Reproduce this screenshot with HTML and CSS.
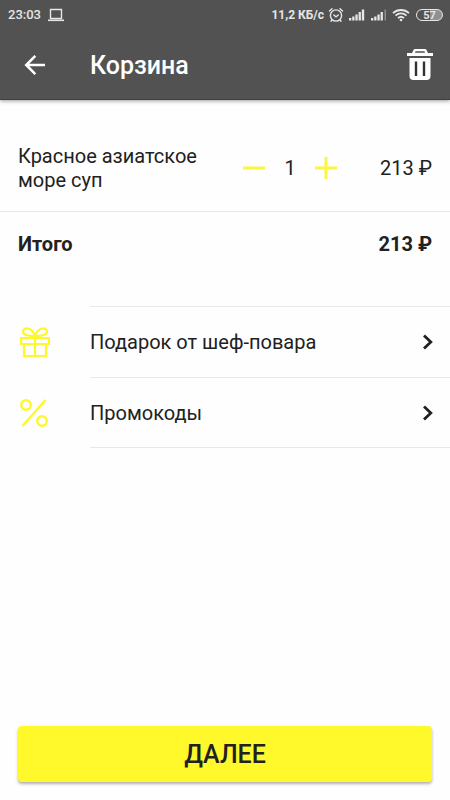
FILE: index.html
```html
<!DOCTYPE html>
<html lang="ru">
<head>
<meta charset="utf-8">
<meta name="viewport" content="width=device-width, initial-scale=1">
<title>Корзина</title>
<link rel="stylesheet" href="styles.css">
</head>
<body>
<div class="screen">
  <header class="top">
    <div class="status">
      <span class="status-time">23:03</span>
      <svg class="laptop" width="18" height="14" viewBox="0 0 18 14" fill="none" stroke="currentColor"><path d="M3.5 1.5h11v9h-11z" stroke-width="1.4"/><path d="M1 12.3h16" stroke-width="1.6"/></svg>
      <span class="status-speed">11,2 КБ/с</span>
      <svg class="alarm" width="16" height="16" viewBox="0 0 16 16" fill="none" stroke="currentColor" stroke-width="1.4" stroke-linecap="round"><circle cx="8" cy="8.5" r="5.6"/><path d="M1.5 4 4 1.8M14.5 4 12 1.8M5.8 8 8 9.8 10.300 8M4 13 3 14.300M12 13l1 1.300"/></svg>
      <svg class="signal" width="18" height="14" viewBox="0 0 18 14" fill="currentColor"><path d="M1 10h2.300v2.500H1zM4.200 8.500h2.300v4H4.200zM7.400 6.500h2.300v6H7.400zM10.600 4h2.300v8.500h-2.300zM13.800 1.500h2.400v11h-2.400z"/></svg>
      <svg class="signal" width="18" height="14" viewBox="0 0 18 14" fill="currentColor"><path d="M1 10h2.300v2.500H1zM4.200 8.500h2.300v4H4.200zM7.400 6.500h2.300v6H7.400zM10.600 4h2.300v8.500h-2.300z"/><path d="M14.500 1.500H16v11h-1.500z" opacity=".4"/></svg>
      <svg class="wifi" width="18" height="14" viewBox="0 0 18 14" fill="none" stroke="currentColor" stroke-width="1.800"><path d="M1 5.200c4.500-4.300 11.500-4.300 16 0M3.500 7.700c3.200-3 7.800-3 11 0M6 10.100c1.800-1.700 4.200-1.700 6 0"/><circle cx="9" cy="12" r="1.300" fill="currentColor" stroke="none"/></svg>
      <span class="battery">57</span>
    </div>
    <div class="appbar">
      <button class="icon-button" type="button" aria-label="Назад">
        <svg width="22" height="22" viewBox="0 0 22 22" fill="none" stroke="currentColor" stroke-width="2.500"><path d="M21 11H3M11.300 1.800 2.200 11l9.100 9.200"/></svg>
      </button>
      <h1 class="title">Корзина</h1>
      <button class="icon-button" type="button" aria-label="Очистить корзину">
        <svg width="26" height="32" viewBox="0 0 26 32"><path fill="currentColor" fill-rule="evenodd" d="M0 4h5l1.500-3Q7 0 8 0h10q1 0 1.500 1L21 4h5v3H0zM8.500 2.300 8 3.700h10l-.5-1.400z"/><path fill="currentColor" d="M2.500 9h21v18q0 4-4 4h-13q-4 0-4-4z"/><path stroke="#333" stroke-width="2.400" d="M9 12.500V27M17 12.500V27"/></svg>
      </button>
    </div>
  </header>

  <main class="content">
    <section class="cart">
      <div class="item">
        <span class="item-name">Красное азиатское море суп</span>
        <div class="stepper">
          <button class="step" type="button" aria-label="Меньше"><svg width="22" height="22" viewBox="0 0 22 22" stroke="currentColor" stroke-width="3"><path d="M0 11h22"/></svg></button>
          <span class="count">1</span>
          <button class="step" type="button" aria-label="Больше"><svg width="22" height="22" viewBox="0 0 22 22" stroke="currentColor" stroke-width="3"><path d="M0 11h22M11 0v22"/></svg></button>
        </div>
        <span class="price">213 ₽</span>
      </div>
      <div class="total"><span>Итого</span><span>213 ₽</span></div>
    </section>

    <nav class="links">
      <a class="link" href="#gift">
        <span class="link-icon"><svg width="30" height="30" viewBox="0 0 30 30" fill="none" stroke="currentColor" stroke-width="2.200"><path d="M1.100 11h27.800v6H1.100zM4 17v12h22V17M15 11v18M15 9C11 9 3 9 3 4.500 3 0 12-.5 15 9ZM15 9c4 0 12 0 12-4.500C27 0 18-.5 15 9Z"/></svg></span>
        <span class="link-body">Подарок от шеф-повара
          <svg width="12" height="16" viewBox="0 0 12 16" fill="none" stroke="currentColor" stroke-width="2.800"><path d="m2 1.500 6.800 6.500L2 14.500"/></svg>
        </span>
      </a>
      <a class="link" href="#promo">
        <span class="link-icon"><svg width="28" height="28" viewBox="0 0 28 28" fill="none" stroke="currentColor" stroke-width="2.400"><circle cx="6" cy="6" r="4.800"/><circle cx="22" cy="22" r="4.800"/><path d="M25.500 1 2.500 27"/></svg></span>
        <span class="link-body">Промокоды
          <svg width="12" height="16" viewBox="0 0 12 16" fill="none" stroke="currentColor" stroke-width="2.800"><path d="m2 1.500 6.800 6.500L2 14.500"/></svg>
        </span>
      </a>
    </nav>
  </main>

  <footer class="footer"><button class="next" type="button">ДАЛЕЕ</button></footer>
</div>
</body>
</html>
```
FILE: styles.css
```css
* { box-sizing: border-box; }

body {
  margin: 0;
  background: #fefefe;
  color: #212121;
  font: 20px/24px Roboto, "Noto Sans", sans-serif;
}

button {
  padding: 0;
  border: 0;
  background: none;
  color: inherit;
  font: inherit;
}

svg { display: block; flex: none; }

.screen {
  display: flex;
  flex-direction: column;
  min-height: 100vh;
}

.top {
  background: #525252;
  color: #fff;
  border-bottom: 1px solid #404040;
  box-shadow: 0 1px 4px rgba(0, 0, 0, 0.4);
}

.status {
  display: flex;
  align-items: center;
  gap: 4px;
  height: 30px;
  padding: 0 7px 0 8px;
  color: #e6e6e6;
  font-size: 13px;
  font-weight: 500;
}

.status-speed {
  margin-left: auto;
  font-size: 12px;
  font-weight: 700;
}

.laptop { margin-left: 2px; }

.battery {
  width: 27px;
  height: 12px;
  margin-left: 2px;
  border: 1px solid #e6e6e6;
  border-radius: 6px;
  background: linear-gradient(90deg, #525252 50%, #909090 50%);
  font-size: 11px;
  font-weight: 700;
  line-height: 11px;
  text-align: center;
}

.appbar {
  display: flex;
  align-items: center;
  height: 69px;
  padding: 0 17px 0 24px;
}

.title {
  flex: 1;
  margin: 0 0 0 44px;
  padding-top: 2px;
  font-size: 25px;
  font-weight: 500;
}

.content { flex: 1; }

.cart { padding-top: 25px; }

.item {
  display: flex;
  align-items: center;
  height: 87px;
  padding: 0 18px;
  border-bottom: 1px solid #e8e8e8;
}

.item-name { flex: 1; padding-right: 32px; }

.stepper {
  display: flex;
  align-items: center;
}

.step { color: #fcf63c; }
.count { width: 50px; text-align: center; }
.price { width: 95px; text-align: right; }

.total {
  display: flex;
  justify-content: space-between;
  padding: 20px 18px;
  font-weight: 700;
}

.links { margin-top: 30px; }

.link {
  display: grid;
  grid-template-columns: 90px 1fr;
  color: inherit;
  text-decoration: none;
}

.link-icon {
  padding: 21px 20px;
  color: #fdf829;
}

.link-body {
  display: flex;
  align-items: center;
  justify-content: space-between;
  padding-right: 16px;
  border-bottom: 1px solid #e8e8e8;
}

.link:first-child .link-body { border-top: 1px solid #e8e8e8; }

.footer { padding: 18px; }

.next {
  display: block;
  width: 100%;
  height: 56px;
  padding-top: 2px;
  border-radius: 4px;
  background: #fff82b;
  box-shadow: 0 2px 3px rgba(0, 0, 0, 0.3);
  font-size: 25px;
  font-weight: 500;
}
```
